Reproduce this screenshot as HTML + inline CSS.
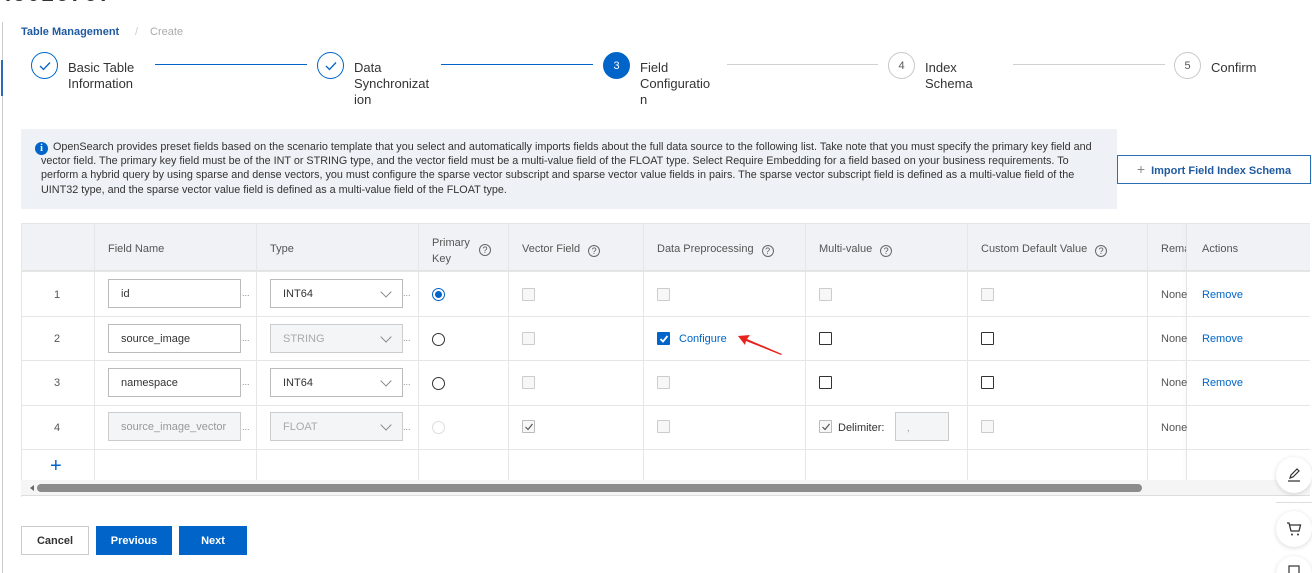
<!DOCTYPE html>
<html><head><meta charset="utf-8"><style>
*{box-sizing:border-box;margin:0;padding:0}
html,body{width:1312px;height:573px;overflow:hidden}
body{background:#fff;font-family:"Liberation Sans",sans-serif;color:#333;position:relative;font-size:11px}
.a{position:absolute}
.circ{position:absolute;width:27px;height:27px;border-radius:50%;border:1px solid #0064c8;display:flex;align-items:center;justify-content:center;font-size:11px;color:#0064c8}
.circ.g{border-color:#c8c8c8;color:#555}
.st{position:absolute;font-size:13px;line-height:16px;color:#333}
.ln{position:absolute;height:1px;background:#0064c8;top:64px}
.ln.g{background:#d0d0d0}
.th{position:absolute;top:223px;height:48px;background:#f0f2f5;border-bottom:1px solid #e3e3e3}
.vl{position:absolute;width:1px;background:#e6e6e6;top:223px;height:257px}
.hl{position:absolute;height:1px;background:#e6e6e6;left:21px;width:1289px}
.ht{position:absolute;font-size:11px;color:#555}
.q{display:inline-block;width:12px;height:12px;border:1px solid #666;border-radius:50%;font-size:9px;line-height:10px;text-align:center;margin-left:8px;vertical-align:-2px}
.inp{position:absolute;width:133px;height:29px;border:1px solid #bbb;padding-left:12px;line-height:28px;font-size:11px;color:#333;background:#fff}
.inp.d{background:#f4f5f7;color:#999;border-color:#ccc}
.sel{position:absolute;width:133px;height:29px;border:1px solid #bbb;padding-left:12px;line-height:28px;font-size:11px;background:#fff}
.sel.d{background:#f4f5f7;color:#aaa;border-color:#ccc}
.sel:after{content:"";position:absolute;right:12px;top:8px;width:7px;height:7px;border-right:1px solid #888;border-bottom:1px solid #888;transform:rotate(45deg)}
.dots{position:absolute;font-size:9px;color:#888}
.cb{position:absolute;width:13px;height:13px;border:1px solid #ccc;background:#f7f7f7;border-radius:1px}
.cb.e{border:1px solid #333;background:#fff}
.rd{position:absolute;width:13px;height:13px;border-radius:50%;border:1px solid #333;background:#fff}
.num{position:absolute;left:54px;font-size:11px;color:#555}
.rm{position:absolute;left:1202px;color:#0064c8;font-size:11px}
.none{position:absolute;left:1161px;font-size:11px;color:#555}
.btn{position:absolute;top:526px;height:29px;font-weight:bold;font-size:11px;display:flex;align-items:center;justify-content:center}
.fab{position:absolute;left:1276px;width:36px;height:36px;border-radius:50%;background:#fff;box-shadow:0 1px 5px rgba(0,0,0,.15)}
.nt{position:absolute;left:41px;font-size:10.8px;color:#333;white-space:nowrap}
</style></head><body>
<div class="a" style="left:2px;top:22px;width:1px;height:551px;background:#ccc"></div>
<div class="a" style="left:1px;top:60px;width:2px;height:36px;background:#2c6cb0"></div>
<div class="a" style="left:5px;top:-19px;font-size:22px;font-weight:bold;color:#333;letter-spacing:2px">I5026767</div>

<div class="a" style="left:21px;top:26px;font-size:11px;font-weight:bold;color:#1f5aa0">Table Management</div>
<div class="a" style="left:135px;top:26px;font-size:11px;color:#ccc">/</div>
<div class="a" style="left:150px;top:26px;font-size:11px;color:#aaa">Create</div>

<div class="circ" style="left:31px;top:52px">
<svg width="12" height="10" viewBox="0 0 12 10"><path d="M1 5l3.5 3.5L11 1.5" fill="none" stroke="#0064c8" stroke-width="1.3"/></svg></div>
<div class="st" style="left:68px;top:60px">Basic Table<br>Information</div>
<div class="ln" style="left:155px;width:152px"></div>
<div class="circ" style="left:317px;top:52px">
<svg width="12" height="10" viewBox="0 0 12 10"><path d="M1 5l3.5 3.5L11 1.5" fill="none" stroke="#0064c8" stroke-width="1.3"/></svg></div>
<div class="st" style="left:354px;top:60px">Data<br>Synchronizat<br>ion</div>
<div class="ln" style="left:441px;width:152px"></div>
<div class="circ" style="left:603px;top:52px;background:#0064c8;color:#fff">3</div>
<div class="st" style="left:640px;top:60px">Field<br>Configuratio<br>n</div>
<div class="ln g" style="left:727px;width:151px"></div>
<div class="circ g" style="left:888px;top:52px">4</div>
<div class="st" style="left:925px;top:60px">Index<br>Schema</div>
<div class="ln g" style="left:1013px;width:152px"></div>
<div class="circ g" style="left:1174px;top:52px">5</div>
<div class="st" style="left:1211px;top:60px">Confirm</div>

<div class="a" style="left:21px;top:129px;width:1096px;height:80px;background:#eef1f5"></div>
<div class="a" style="left:35px;top:142px;width:13px;height:13px;border-radius:50%;background:#0064c8;color:#fff;font-size:10px;font-weight:bold;text-align:center;line-height:13px;font-family:'Liberation Serif',serif">i</div>
<div class="nt" style="left:53px;top:141px">OpenSearch provides preset fields based on the scenario template that you select and automatically imports fields about the full data source to the following list. Take note that you must specify the primary key field and</div>
<div class="nt" style="top:155px">vector field. The primary key field must be of the INT or STRING type, and the vector field must be a multi-value field of the FLOAT type. Select Require Embedding for a field based on your business requirements. To</div>
<div class="nt" style="top:169px">perform a hybrid query by using sparse and dense vectors, you must configure the sparse vector subscript and sparse vector value fields in pairs. The sparse vector subscript field is defined as a multi-value field of the</div>
<div class="nt" style="top:184px">UINT32 type, and the sparse vector value field is defined as a multi-value field of the FLOAT type.</div>
<div class="a" style="left:1117px;top:155px;width:194px;height:29px;border:1px solid #2c6cb0;color:#1f5aa0;font-weight:bold;font-size:11px;line-height:27px;text-align:center"><span style="font-weight:normal;color:#888;font-size:14px;margin-right:6px">+</span>Import Field Index Schema</div>

<div class="th" style="left:21px;width:1289px"></div>
<div class="a" style="left:21px;top:223px;width:1289px;height:1px;background:#e6e6e6"></div>
<div class="vl" style="left:21px;height:274px"></div>
<div class="vl" style="left:94px"></div><div class="vl" style="left:256px"></div><div class="vl" style="left:418px"></div><div class="vl" style="left:508px"></div><div class="vl" style="left:643px"></div><div class="vl" style="left:805px"></div><div class="vl" style="left:967px"></div><div class="vl" style="left:1147px"></div>
<div class="a" style="left:1186px;top:223px;width:1px;height:257px;background:#e3e3e3;box-shadow:-2px 0 3px rgba(0,0,0,.06)"></div>
<div class="hl" style="top:271px"></div><div class="hl" style="top:316px"></div><div class="hl" style="top:360px"></div><div class="hl" style="top:405px"></div><div class="hl" style="top:449px"></div>

<div class="ht" style="left:108px;top:243px">Field Name</div>
<div class="ht" style="left:270px;top:243px">Type</div>
<div class="ht" style="left:432px;top:235px;line-height:16px">Primary<br>Key</div><div class="ht" style="left:471px;top:242px"><span class="q">?</span></div>
<div class="ht" style="left:522px;top:243px">Vector Field<span class="q">?</span></div>
<div class="ht" style="left:657px;top:243px">Data Preprocessing<span class="q">?</span></div>
<div class="ht" style="left:819px;top:243px">Multi-value<span class="q">?</span></div>
<div class="ht" style="left:981px;top:243px">Custom Default Value<span class="q">?</span></div>
<div class="ht" style="left:1161px;top:243px;width:25px;overflow:hidden">Remarks</div>
<div class="ht" style="left:1202px;top:243px">Actions</div>

<div class="num" style="top:289px">1</div>
<div class="inp" style="left:108px;top:279px">id</div><div class="dots" style="left:242px;top:288px">...</div>
<div class="sel" style="left:270px;top:279px">INT64</div><div class="dots" style="left:403px;top:288px">...</div>
<div class="rd" style="left:432px;top:288px;border-color:#0064c8"><div style="position:absolute;left:2px;top:2px;width:7px;height:7px;border-radius:50%;background:#0064c8"></div></div>
<div class="cb" style="left:522px;top:288px"></div><div class="cb" style="left:657px;top:288px"></div><div class="cb" style="left:819px;top:288px"></div><div class="cb" style="left:981px;top:288px"></div>
<div class="none" style="top:289px">None</div><div class="rm" style="top:289px">Remove</div>

<div class="num" style="top:333px">2</div>
<div class="inp" style="left:108px;top:324px">source_image</div><div class="dots" style="left:242px;top:333px">...</div>
<div class="sel d" style="left:270px;top:324px">STRING</div><div class="dots" style="left:403px;top:333px">...</div>
<div class="rd" style="left:432px;top:333px"></div>
<div class="cb" style="left:522px;top:332px"></div>
<div class="cb" style="left:657px;top:332px;background:#0064c8;border-color:#0064c8"><svg class="a" style="left:1px;top:1px" width="10" height="10" viewBox="0 0 10 10"><path d="M1.5 5l2.5 2.5L8.5 2" fill="none" stroke="#fff" stroke-width="1.8"/></svg></div>
<div class="a" style="left:679px;top:333px;color:#0064c8">Configure</div>
<svg class="a" style="left:736px;top:332px" width="50" height="25" viewBox="0 0 50 25"><path d="M2 4L14 3L11 7L46 22L45 23L10 9L9 13Z" fill="#e8231e"/></svg>
<div class="cb e" style="left:819px;top:332px"></div><div class="cb e" style="left:981px;top:332px"></div>
<div class="none" style="top:333px">None</div><div class="rm" style="top:333px">Remove</div>

<div class="num" style="top:377px">3</div>
<div class="inp" style="left:108px;top:368px">namespace</div><div class="dots" style="left:242px;top:377px">...</div>
<div class="sel" style="left:270px;top:368px">INT64</div><div class="dots" style="left:403px;top:377px">...</div>
<div class="rd" style="left:432px;top:377px"></div>
<div class="cb" style="left:522px;top:376px"></div><div class="cb" style="left:657px;top:376px"></div>
<div class="cb e" style="left:819px;top:376px"></div><div class="cb e" style="left:981px;top:376px"></div>
<div class="none" style="top:377px">None</div><div class="rm" style="top:377px">Remove</div>

<div class="num" style="top:422px">4</div>
<div class="inp d" style="left:108px;top:412px">source_image_vector</div><div class="dots" style="left:242px;top:422px">...</div>
<div class="sel d" style="left:270px;top:412px">FLOAT</div><div class="dots" style="left:403px;top:422px">...</div>
<div class="rd" style="left:432px;top:421px;border-color:#ddd"></div>
<div class="cb" style="left:522px;top:420px;border-color:#bbb"><svg class="a" style="left:1px;top:1px" width="10" height="10" viewBox="0 0 10 10"><path d="M1.5 5l2.5 2.5L8.5 2" fill="none" stroke="#555" stroke-width="1.2"/></svg></div>
<div class="cb" style="left:657px;top:420px"></div>
<div class="cb" style="left:819px;top:420px;border-color:#bbb"><svg class="a" style="left:1px;top:1px" width="10" height="10" viewBox="0 0 10 10"><path d="M1.5 5l2.5 2.5L8.5 2" fill="none" stroke="#555" stroke-width="1.2"/></svg></div>
<div class="a" style="left:838px;top:422px;color:#333">Delimiter:</div>
<div class="a" style="left:895px;top:412px;width:54px;height:29px;border:1px solid #ccc;background:#f4f5f7;color:#999;font-size:10px;padding:10px 0 0 11px">,</div>
<div class="cb" style="left:981px;top:420px"></div>
<div class="none" style="top:422px">None</div>

<div class="a" style="left:50px;top:455px;font-size:20px;color:#0064c8;font-weight:300">+</div>

<div class="a" style="left:21px;top:480px;width:1289px;height:16px;background:#f5f5f5;border-bottom:1px solid #ddd"></div>
<div class="a" style="left:30px;top:485px;width:0;height:0;border-top:3px solid transparent;border-bottom:3px solid transparent;border-right:4px solid #666"></div>
<div class="a" style="left:37px;top:484px;width:1105px;height:8px;border-radius:4px;background:#8c8c8c"></div>

<div class="btn" style="left:21px;width:68px;border:1px solid #ccc;color:#333">Cancel</div>
<div class="btn" style="left:96px;width:76px;background:#0064c8;color:#fff">Previous</div>
<div class="btn" style="left:179px;width:68px;background:#0064c8;color:#fff">Next</div>

<div class="fab" style="top:457px"><svg class="a" style="left:9px;top:9px" width="18" height="18" viewBox="0 0 18 18"><path d="M5 12l1-3 6-6 2 2-6 6-3 1zM3 15h12" fill="none" stroke="#333" stroke-width="1.2"/></svg></div>
<div class="a" style="left:1276px;top:502px;width:36px;height:1px;background:#ddd"></div>
<div class="fab" style="top:511px"><svg class="a" style="left:9px;top:9px" width="18" height="18" viewBox="0 0 18 18"><path d="M2 3h2l2 8h8l1.5-6H5" fill="none" stroke="#333" stroke-width="1.3"/><circle cx="7" cy="14.5" r="1" fill="#333"/><circle cx="13" cy="14.5" r="1" fill="#333"/></svg></div>
<div class="fab" style="top:556px"><svg class="a" style="left:10px;top:8px" width="16" height="16" viewBox="0 0 16 16"><rect x="3" y="2" width="10" height="8" fill="none" stroke="#333" stroke-width="1.2"/></svg></div>
</body></html>
